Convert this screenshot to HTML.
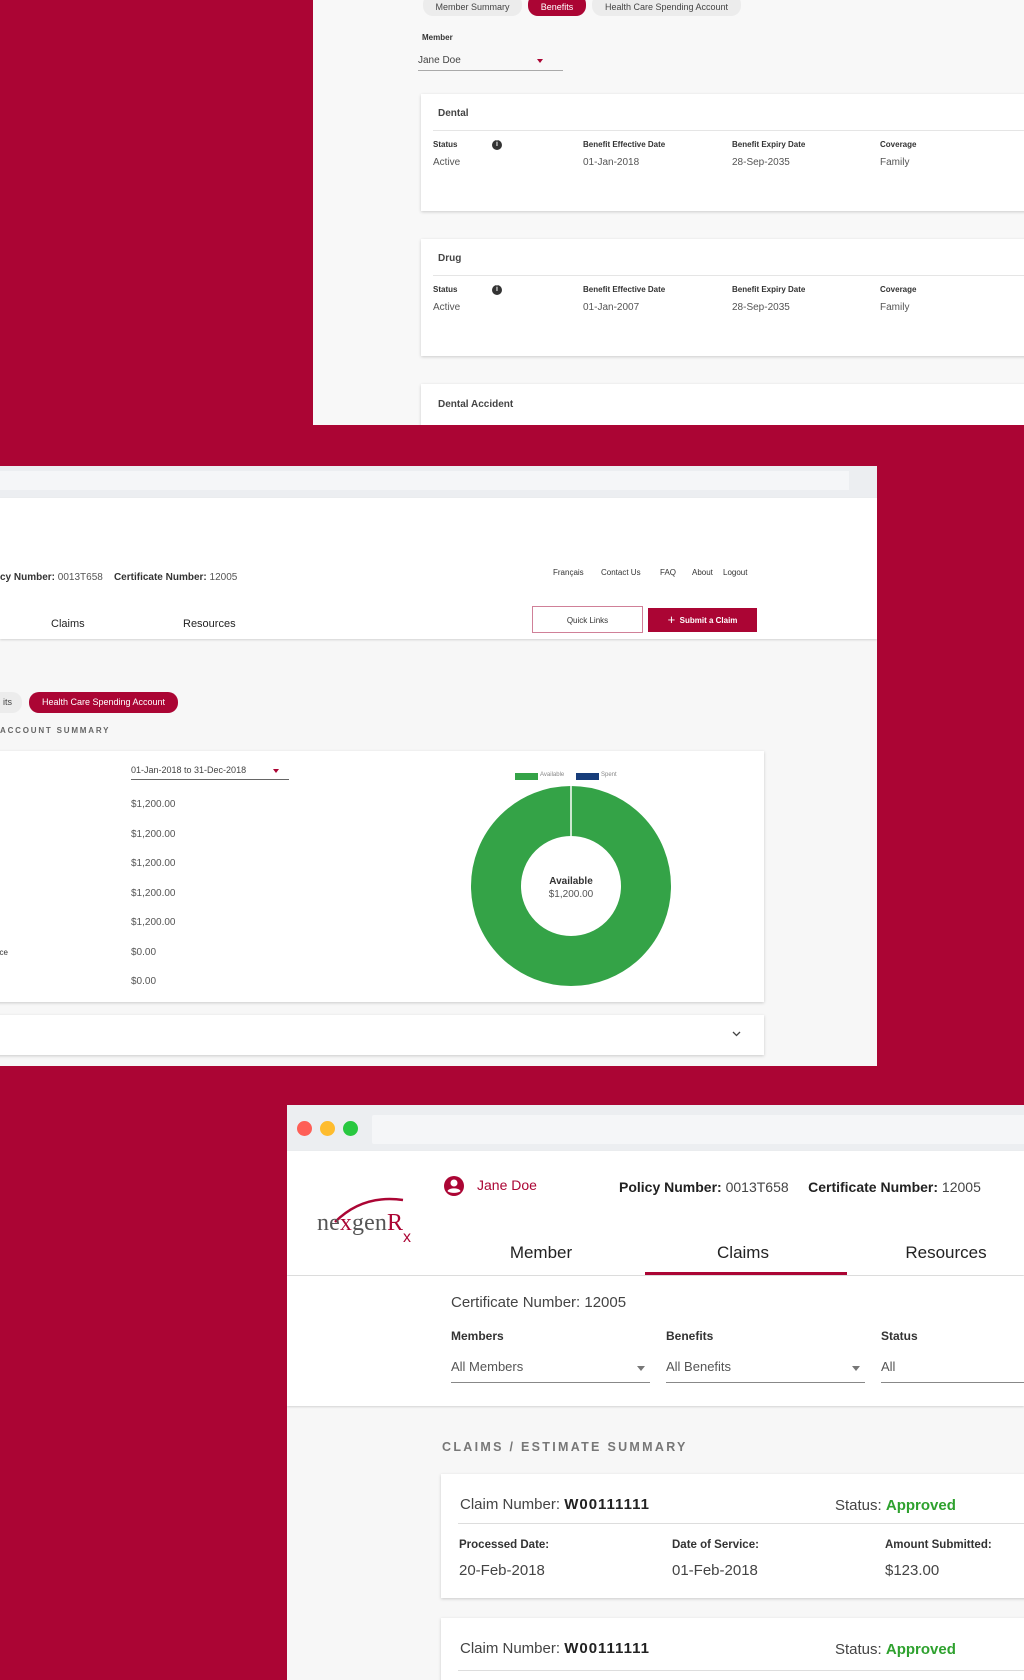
<!DOCTYPE html>
<html><head><meta charset="utf-8">
<style>
*{margin:0;padding:0;box-sizing:border-box}
body{width:1024px;height:1680px;background:#ab0534;position:relative;overflow:hidden;font-family:"Liberation Sans",sans-serif;color:#333}
.a{position:absolute;white-space:nowrap}
.p{position:absolute;overflow:hidden}
.card{position:absolute;background:#fff;box-shadow:0 1px 3px rgba(0,0,0,.18)}
.lbl{font-size:8px;font-weight:bold;color:#333}
.val{font-size:10px;color:#555}
.pill{position:absolute;border-radius:10px;font-size:9px;text-align:center;color:#444;background:#ececec}
</style></head><body>

<!-- Panel 1 -->
<div class="p" style="left:313px;top:0;width:711px;height:425px;background:#f8f8f8">
  <div class="pill" style="left:110px;top:-6px;width:99px;height:22px;line-height:26px">Member Summary</div>
  <div class="pill" style="left:215px;top:-6px;width:58px;height:22px;line-height:26px;background:#ab0534;color:#fff">Benefits</div>
  <div class="pill" style="left:279px;top:-6px;width:149px;height:22px;line-height:26px">Health Care Spending Account</div>
  <div class="a lbl" style="left:109px;top:33px">Member</div>
  <div class="a" style="left:105px;top:55px;font-size:10px;color:#444">Jane Doe</div>
  <div class="a" style="left:224px;top:59px;width:0;height:0;border-left:3px solid transparent;border-right:3px solid transparent;border-top:4px solid #ab0534"></div>
  <div class="a" style="left:105px;top:70px;width:145px;height:1px;background:#aaa"></div>

  <div class="card" style="left:108px;top:94px;width:620px;height:117px">
    <div class="a" style="left:17px;top:14px;font-size:10px;font-weight:bold;color:#444">Dental</div>
    <div class="a" style="left:12px;top:36px;width:610px;height:1px;background:#e5e5e5"></div>
    <div class="a lbl" style="left:12px;top:46px">Status</div>
    <div class="a" style="left:71px;top:46px;width:10px;height:10px;border-radius:50%;background:#333;color:#fff;font-size:7px;text-align:center;line-height:10px;font-weight:bold">i</div>
    <div class="a lbl" style="left:162px;top:46px">Benefit Effective Date</div>
    <div class="a lbl" style="left:311px;top:46px">Benefit Expiry Date</div>
    <div class="a lbl" style="left:459px;top:46px">Coverage</div>
    <div class="a val" style="left:12px;top:63px">Active</div>
    <div class="a val" style="left:162px;top:63px">01-Jan-2018</div>
    <div class="a val" style="left:311px;top:63px">28-Sep-2035</div>
    <div class="a val" style="left:459px;top:63px">Family</div>
  </div>
  <div class="card" style="left:108px;top:239px;width:620px;height:117px">
    <div class="a" style="left:17px;top:14px;font-size:10px;font-weight:bold;color:#444">Drug</div>
    <div class="a" style="left:12px;top:36px;width:610px;height:1px;background:#e5e5e5"></div>
    <div class="a lbl" style="left:12px;top:46px">Status</div>
    <div class="a" style="left:71px;top:46px;width:10px;height:10px;border-radius:50%;background:#333;color:#fff;font-size:7px;text-align:center;line-height:10px;font-weight:bold">i</div>
    <div class="a lbl" style="left:162px;top:46px">Benefit Effective Date</div>
    <div class="a lbl" style="left:311px;top:46px">Benefit Expiry Date</div>
    <div class="a lbl" style="left:459px;top:46px">Coverage</div>
    <div class="a val" style="left:12px;top:63px">Active</div>
    <div class="a val" style="left:162px;top:63px">01-Jan-2007</div>
    <div class="a val" style="left:311px;top:63px">28-Sep-2035</div>
    <div class="a val" style="left:459px;top:63px">Family</div>
  </div>
  <div class="card" style="left:108px;top:384px;width:620px;height:60px">
    <div class="a" style="left:17px;top:15px;font-size:10px;font-weight:bold;color:#444">Dental Accident</div>
  </div>
</div>

<!-- Panel 2 -->
<div class="p" style="left:0;top:466px;width:877px;height:600px;background:#f7f7f7">
  <div class="a" style="left:0;top:0;width:877px;height:32px;background:#eceef1"></div>
  <div class="a" style="left:0;top:5px;width:849px;height:19px;background:#f5f6f8"></div>
  <div class="a" style="left:0;top:32px;width:877px;height:141px;background:#fff;box-shadow:0 1px 2px rgba(0,0,0,.15)"></div>
  <div class="a" style="left:0;top:106px;font-size:10px;color:#555"><b style="color:#333">cy Number:</b> 0013T658 &nbsp;&nbsp;&nbsp;<b style="color:#333">Certificate Number:</b> 12005</div>
  <div class="a" style="left:553px;top:102px;font-size:8px;color:#333">Français</div>
  <div class="a" style="left:601px;top:102px;font-size:8px;color:#333">Contact Us</div>
  <div class="a" style="left:660px;top:102px;font-size:8px;color:#333">FAQ</div>
  <div class="a" style="left:692px;top:102px;font-size:8px;color:#333">About</div>
  <div class="a" style="left:723px;top:102px;font-size:8px;color:#333">Logout</div>
  <div class="a" style="left:51px;top:152px;font-size:11px;color:#222">Claims</div>
  <div class="a" style="left:183px;top:152px;font-size:11px;color:#222">Resources</div>
  <div class="a" style="left:532px;top:140px;width:111px;height:27px;border:1px solid #d08098;background:#fff;font-size:8px;text-align:center;line-height:27px;color:#333">Quick Links</div>
  <div class="a" style="left:648px;top:142px;width:109px;height:24px;background:#ab0534;color:#fff;font-size:8px;font-weight:bold;text-align:center;line-height:24px"><span style="font-size:13px;font-weight:normal;vertical-align:-1px">+</span>&nbsp; Submit a Claim</div>

  <div class="pill" style="left:-20px;top:226px;width:42px;height:21px;line-height:21px;text-align:right;padding-right:10px">its</div>
  <div class="pill" style="left:29px;top:226px;width:149px;height:21px;line-height:21px;background:#ab0534;color:#fff">Health Care Spending Account</div>
  <div class="a" style="left:0;top:260px;font-size:8px;font-weight:bold;letter-spacing:1.8px;color:#666">ACCOUNT SUMMARY</div>

  <div class="card" style="left:-5px;top:285px;width:769px;height:251px">
    <div class="a" style="left:136px;top:14px;font-size:9px;color:#444">01-Jan-2018 to 31-Dec-2018</div>
    <div class="a" style="left:278px;top:18px;width:0;height:0;border-left:3px solid transparent;border-right:3px solid transparent;border-top:4px solid #ab0534"></div>
    <div class="a" style="left:136px;top:28px;width:158px;height:1px;background:#666"></div>
    <div class="a val" style="left:136px;top:48px">$1,200.00</div>
    <div class="a val" style="left:136px;top:78px">$1,200.00</div>
    <div class="a val" style="left:136px;top:107px">$1,200.00</div>
    <div class="a val" style="left:136px;top:137px">$1,200.00</div>
    <div class="a val" style="left:136px;top:166px">$1,200.00</div>
    <div class="a" style="left:0;top:197px;font-size:8px;color:#333">&nbsp;&nbsp;ce</div>
    <div class="a val" style="left:136px;top:196px">$0.00</div>
    <div class="a val" style="left:136px;top:225px">$0.00</div>
    <div class="a" style="left:520px;top:22px;width:23px;height:7px;background:#34a347"></div>
    <div class="a" style="left:545px;top:21px;font-size:6px;color:#888">Available</div>
    <div class="a" style="left:581px;top:22px;width:23px;height:7px;background:#173d7a"></div>
    <div class="a" style="left:606px;top:21px;font-size:6px;color:#888">Spent</div>
    <svg class="a" style="left:471px;top:30px" width="210" height="210" viewBox="0 0 210 210">
      <circle cx="105" cy="105" r="75" fill="none" stroke="#34a347" stroke-width="50"/>
      <line x1="105" y1="5" x2="105" y2="55" stroke="#fff" stroke-width="1.5"/>
    </svg>
    <div class="a" style="left:576px;top:125px;width:0"><div style="position:absolute;left:-40px;width:80px;text-align:center;font-size:10px;font-weight:bold;color:#333">Available</div><div style="position:absolute;left:-40px;top:13px;width:80px;text-align:center;font-size:10px;color:#555">$1,200.00</div></div>
  </div>
  <div class="card" style="left:-5px;top:549px;width:769px;height:40px">
    <svg class="a" style="left:737px;top:16px" width="9" height="6" viewBox="0 0 9 6"><path d="M1 1 L4.5 4.5 L8 1" fill="none" stroke="#444" stroke-width="1.3"/></svg>
  </div>
</div>

<!-- Panel 3 -->
<div class="p" style="left:287px;top:1105px;width:737px;height:575px;background:#f7f7f7">
  <div class="a" style="left:0;top:0;width:737px;height:46px;background:#eceef1"></div>
  <div class="a" style="left:85px;top:10px;width:660px;height:29px;background:#f5f6f8;border-radius:2px"></div>
  <div class="a" style="left:10px;top:16px;width:15px;height:15px;border-radius:50%;background:#fe5f57"></div>
  <div class="a" style="left:33px;top:16px;width:15px;height:15px;border-radius:50%;background:#febc2e"></div>
  <div class="a" style="left:56px;top:16px;width:15px;height:15px;border-radius:50%;background:#28c840"></div>
  <div class="a" style="left:0;top:46px;width:737px;height:124px;background:#fff;box-shadow:0 1px 2px rgba(0,0,0,.15)"></div>

  <!-- logo -->
  <svg class="a" style="left:28px;top:83px" width="110" height="60" viewBox="0 0 110 60">
    <path d="M20 34 C38 16 60 8 88 12" fill="none" stroke="#ab0534" stroke-width="2.5"/>
    <text x="2" y="42" font-family="Liberation Serif,serif" font-size="24" fill="#555" textLength="86">ne<tspan fill="#ab0534">x</tspan>gen<tspan fill="#ab0534">R</tspan></text>
    <text x="88" y="54" font-family="Liberation Sans,sans-serif" font-size="16" fill="#ab0534">x</text>
  </svg>
  <svg class="a" style="left:156px;top:70px" width="22" height="22" viewBox="0 0 22 22">
    <circle cx="11" cy="11" r="10" fill="#ab0534"/>
    <circle cx="11" cy="8" r="3.5" fill="#fff"/>
    <path d="M4.5 16 C6 12.5 16 12.5 17.5 16 C15.5 18.5 6.5 18.5 4.5 16Z" fill="#fff"/>
  </svg>
  <div class="a" style="left:190px;top:72px;font-size:14px;color:#ab0534">Jane Doe</div>
  <div class="a" style="left:332px;top:74px;font-size:14px;color:#444"><b style="color:#222">Policy Number:</b> 0013T658 &nbsp;&nbsp;&nbsp;&nbsp;<b style="color:#222">Certificate Number:</b> 12005</div>
  <div class="a" style="left:254px;top:138px;width:0"><div style="position:absolute;left:-60px;width:120px;text-align:center;font-size:17px;color:#222">Member</div></div>
  <div class="a" style="left:456px;top:138px;width:0"><div style="position:absolute;left:-60px;width:120px;text-align:center;font-size:17px;color:#222">Claims</div></div>
  <div class="a" style="left:659px;top:138px;width:0"><div style="position:absolute;left:-60px;width:120px;text-align:center;font-size:17px;color:#222">Resources</div></div>
  <div class="a" style="left:358px;top:167px;width:202px;height:3px;background:#ab0534"></div>

  <div class="a" style="left:0;top:171px;width:737px;height:130px;background:#fff;box-shadow:0 1px 2px rgba(0,0,0,.15)"></div>
  <div class="a" style="left:164px;top:189px;font-size:15px;color:#444">Certificate Number: 12005</div>
  <div class="a" style="left:164px;top:224px;font-size:12px;font-weight:bold;color:#333">Members</div>
  <div class="a" style="left:379px;top:224px;font-size:12px;font-weight:bold;color:#333">Benefits</div>
  <div class="a" style="left:594px;top:224px;font-size:12px;font-weight:bold;color:#333">Status</div>
  <div class="a" style="left:164px;top:254px;font-size:13px;color:#555">All Members</div>
  <div class="a" style="left:379px;top:254px;font-size:13px;color:#555">All Benefits</div>
  <div class="a" style="left:594px;top:254px;font-size:13px;color:#555">All</div>
  <div class="a" style="left:350px;top:261px;border-left:4px solid transparent;border-right:4px solid transparent;border-top:5px solid #777"></div>
  <div class="a" style="left:565px;top:261px;border-left:4px solid transparent;border-right:4px solid transparent;border-top:5px solid #777"></div>
  <div class="a" style="left:164px;top:277px;width:199px;height:1px;background:#888"></div>
  <div class="a" style="left:379px;top:277px;width:199px;height:1px;background:#888"></div>
  <div class="a" style="left:594px;top:277px;width:150px;height:1px;background:#888"></div>

  <div class="a" style="left:155px;top:335px;font-size:12.5px;font-weight:bold;letter-spacing:2.3px;color:#777">CLAIMS / ESTIMATE SUMMARY</div>

  <div class="card" style="left:154px;top:369px;width:600px;height:124px">
    <div class="a" style="left:19px;top:22px;font-size:15px;color:#444">Claim Number: <b style="color:#222;letter-spacing:1px">W00111111</b></div>
    <div class="a" style="left:394px;top:23px;font-size:15px;color:#444">Status: <b style="color:#2ea12e">Approved</b></div>
    <div class="a" style="left:17px;top:49px;width:600px;height:1px;background:#ddd"></div>
    <div class="a" style="left:18px;top:65px;font-size:11.5px;font-weight:bold;color:#333">Processed Date:</div>
    <div class="a" style="left:231px;top:65px;font-size:11.5px;font-weight:bold;color:#333">Date of Service:</div>
    <div class="a" style="left:444px;top:65px;font-size:11.5px;font-weight:bold;color:#333">Amount Submitted:</div>
    <div class="a" style="left:18px;top:88px;font-size:15px;color:#444">20-Feb-2018</div>
    <div class="a" style="left:231px;top:88px;font-size:15px;color:#444">01-Feb-2018</div>
    <div class="a" style="left:444px;top:88px;font-size:15px;color:#444">$123.00</div>
  </div>
  <div class="card" style="left:154px;top:513px;width:600px;height:124px">
    <div class="a" style="left:19px;top:22px;font-size:15px;color:#444">Claim Number: <b style="color:#222;letter-spacing:1px">W00111111</b></div>
    <div class="a" style="left:394px;top:23px;font-size:15px;color:#444">Status: <b style="color:#2ea12e">Approved</b></div>
    <div class="a" style="left:17px;top:52px;width:600px;height:1px;background:#ddd"></div>
  </div>
</div>
</body></html>
